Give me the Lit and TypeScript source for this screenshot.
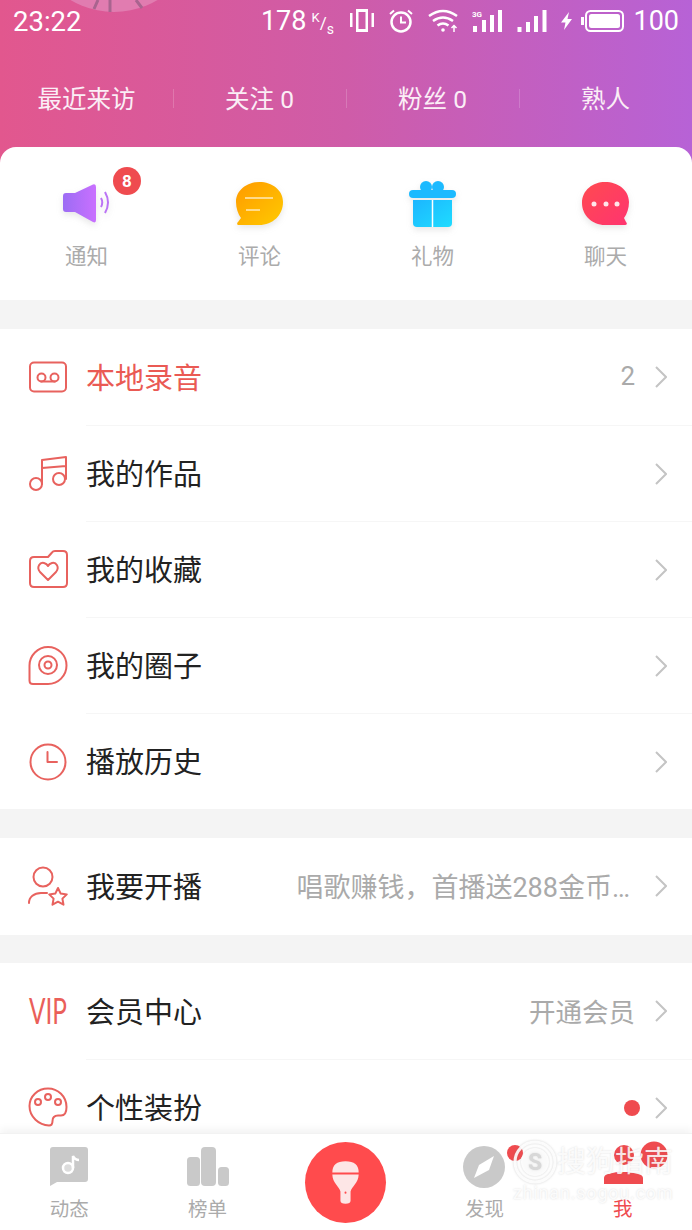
import { LitElement, html, svg, css } from 'lit'
import { customElement } from 'lit/decorators.js'

const rowIcons: Record<string, unknown> = {
  tape: svg`<rect x="2" y="5.500" width="36" height="29" rx="4"/><circle cx="13.500" cy="20.500" r="4"/><circle cx="26.500" cy="20.500" r="4"/><path d="M13 24.500H27"/>`,
  music: svg`<circle cx="8" cy="31" r="6"/><circle cx="31" cy="26" r="6"/><path d="M14 31V7L38 4V26M14 15L38 13"/>`,
  folder: svg`<path d="M6 8H20L24 3.500Q25 2 27 2H35Q39 2 39 6V34Q39 38 35 38H6Q2 38 2 34V12Q2 8 6 8Z"/><path d="M20 31L12 23C8 18 12 13 16 14C18 14.500 19.500 16 20 17C20.500 16 22 14.500 24 14C28 13 32 18 28 23Z"/>`,
  disc: svg`<path d="M20 2A18.500 18.500 0 1 1 20 39H5Q1.500 39 1.500 35.500V20.500A18.500 18.500 0 0 1 20 2Z"/><circle cx="20" cy="20" r="9"/><circle cx="20" cy="20" r="3.500"/>`,
  clock: svg`<circle cx="20" cy="21" r="17.500"/><path d="M19.500 11V21H29"/>`,
  anchor: svg`<circle cx="15" cy="11" r="9.500"/><path d="M1 37C1 31 6 27 13 27H19"/><path d="M30 22L32.700 27.600L38.800 28.400L34.400 32.600L35.500 38.700L30 35.700L24.500 38.700L25.600 32.600L21.200 28.400L27.300 27.600Z"/>`,
  vip: svg`<text class="vip" x="1" y="33" textLength="38" lengthAdjust="spacingAndGlyphs">VIP</text>`,
  palette: svg`<path d="M20 1.500C9.500 1.500 1.500 9.500 1.500 19C1.500 30 11 38 21 38.500C24 38.500 24.500 36 24.500 34C24.500 30 27 28.500 30 28.500H33C36.500 28.500 38.500 25 38.500 20C38.500 9.500 30 1.500 20 1.500Z"/><circle cx="10" cy="15" r="3"/><circle cx="20" cy="10" r="3"/><circle cx="30" cy="15" r="3"/>`,
}

type Row = { icon: string; label: string; accent?: boolean; value?: string; sub?: string; dot?: boolean }

const groups: Row[][] = [
  [
    { icon: 'tape', label: '本地录音', accent: true, value: '2' },
    { icon: 'music', label: '我的作品' },
    { icon: 'folder', label: '我的收藏' },
    { icon: 'disc', label: '我的圈子' },
    { icon: 'clock', label: '播放历史' },
  ],
  [{ icon: 'anchor', label: '我要开播', value: '唱歌赚钱，首播送288金币…', sub: 'long' }],
  [
    { icon: 'vip', label: '会员中心', value: '开通会员', sub: 'short' },
    { icon: 'palette', label: '个性装扮', dot: true },
  ],
]

const quickItems = [
  {
    label: '通知',
    badge: '8',
    icon: svg`<defs><linearGradient id="qa" x1="0" x2="1" y1="0" y2="0"><stop offset="0" stop-color="#9c6cf4"/><stop offset="1" stop-color="#c970ff"/></linearGradient></defs>
      <path fill="url(#qa)" d="M4 13H13L31 4.500Q34 3.500 34 7V40Q34 43.500 31 42L13 32H4Q1 32 1 29V16Q1 13 4 13Z"/>
      <path fill="none" stroke="#bb74f5" stroke-width="2" d="M39 18Q41.500 22.500 39 27M43 12Q49 22.500 43 33"/>`,
  },
  {
    label: '评论',
    icon: svg`<defs><linearGradient id="qb" x1="0" x2="1" y1="0" y2="1"><stop offset="0" stop-color="#ff9a00"/><stop offset="1" stop-color="#ffca00"/></linearGradient></defs>
      <path fill="url(#qb)" d="M24.500 2C37 2 48 10 48 22C48 35 38 45 24 45H4C2 45 1.500 43.500 3 42L6 38C3 34 1 28 1 22C1 10 12 2 24.500 2Z"/>
      <path stroke="#ffe9b8" stroke-width="1.500" d="M10 18H38M11 30H25"/>`,
  },
  {
    label: '礼物',
    icon: svg`<defs><linearGradient id="qc" x1="0" x2="1" y1="0" y2="1"><stop offset="0" stop-color="#1cb6ff"/><stop offset="1" stop-color="#1fdcff"/></linearGradient></defs>
      <circle cx="18" cy="7" r="6" fill="#1cbaff"/><circle cx="30" cy="7" r="6" fill="#1cbaff"/>
      <rect x="1" y="10" width="47" height="8" rx="4" fill="#1cbaff"/>
      <path fill="url(#qc)" d="M5 20H44V43Q44 47 40 47H9Q5 47 5 43Z"/>
      <path stroke="#fff" stroke-width="1.500" d="M24.500 20V47"/>`,
  },
  {
    label: '聊天',
    icon: svg`<defs><linearGradient id="qd" x1="0" x2="1" y1="0" y2="1"><stop offset="0" stop-color="#ff4a50"/><stop offset="1" stop-color="#ff3470"/></linearGradient></defs>
      <path fill="url(#qd)" d="M24 2C12 2 1 10 1 23C1 35 11 45 24 45H44C46 45 46.500 43.500 45 42L43 38C46 34 48 28 48 22C48 10 37 2 24 2Z"/>
      <circle cx="13" cy="24" r="2.500" fill="#ffe6ea"/><circle cx="25" cy="24" r="2.500" fill="#ffe6ea"/><circle cx="36" cy="24" r="2.500" fill="#ffe6ea"/>`,
  },
]

@customElement('app-root')
export class AppRoot extends LitElement {
  static styles = css`
    :host {
      display: block;
      position: relative;
      width: 692px;
      height: 1230px;
      overflow: hidden;
      background: #f4f4f4;
      font-family: Roboto, 'Noto Sans CJK SC', sans-serif;
    }
    .header {
      position: relative;
      height: 163px;
      margin-bottom: -16px;
      background: linear-gradient(90deg, #e2578e 0%, #cf5ca8 50%, #b762d6 100%);
      color: #fff;
    }
    .avatar {
      position: absolute;
      left: 70px;
      top: 0;
    }
    .status {
      display: flex;
      align-items: center;
      height: 42px;
      padding: 0 13px;
      font-size: 27px;
      gap: 14px;
    }
    .time {
      margin-right: auto;
      font-size: 27.500px;
    }
    .status svg {
      display: block;
      fill: #fff;
    }
    .speed {
      display: flex;
      align-items: flex-start;
      margin-left: -9px;
      margin-right: 1px;
      width: 24px;
      height: 22px;
      font-size: 13px;
      line-height: 16px;
    }
    .speed i {
      font-style: normal;
      font-size: 17px;
      line-height: 26px;
    }
    .speed b {
      font-weight: 400;
      font-size: 14px;
      line-height: 38px;
    }
    .batt {
      margin-left: -5px;
    }
    .level {
      margin-left: -5px;
    }
    .tabs {
      display: grid;
      grid-template-columns: repeat(4, 1fr);
      padding-top: 7px;
      height: 96px;
      align-items: center;
      font-size: 24.500px;
      color: #fbeef6;
    }
    .tabs div {
      position: relative;
      text-align: center;
    }
    .tabs div + div::before {
      content: '';
      position: absolute;
      left: 0;
      top: 9px;
      height: 19px;
      width: 1px;
      background: rgba(255, 255, 255, 0.18);
    }
    .quick {
      position: relative;
      display: grid;
      grid-template-columns: repeat(4, 1fr);
      height: 153px;
      box-sizing: border-box;
      padding-top: 33px;
      background: #fff;
      border-radius: 16px 16px 0 0;
    }
    .quick-item {
      position: relative;
      display: flex;
      flex-direction: column;
      align-items: center;
      color: #ababab;
      font-size: 21.500px;
      line-height: 30px;
    }
    .quick-item svg {
      display: block;
      margin-bottom: 14px;
      overflow: visible;
    }
    .shadowed {
      filter: drop-shadow(0 3px 3px rgba(120, 120, 120, 0.18));
    }
    .badge {
      position: absolute;
      left: 113px;
      top: -13px;
      width: 28px;
      height: 28px;
      border-radius: 50%;
      background: #ef4b4f;
      color: #fff;
      font-size: 17px;
      font-weight: 700;
      line-height: 28px;
      text-align: center;
    }
    .group {
      margin-top: 29px;
      background: #fff;
    }
    .quick + .group + .group {
      padding-bottom: 1px;
    }
    .group + .group + .group {
      margin-top: 28px;
    }
    .row {
      display: flex;
      align-items: center;
      height: 96px;
      padding-left: 28px;
    }
    .row svg.ic {
      flex: none;
      overflow: visible;
      fill: none;
      stroke: #e8625e;
      stroke-width: 2;
      stroke-linejoin: round;
      stroke-linecap: round;
    }
    .vip {
      font-family: Lato, sans-serif;
      font-weight: 400;
      font-size: 36px;
      fill: #ea5f5a;
      stroke: none;
    }
    .body {
      flex: 1;
      display: flex;
      align-items: center;
      height: 100%;
      margin-left: 18px;
      padding-right: 25px;
      box-sizing: border-box;
      font-size: 29px;
      color: #222;
    }
    .row + .row .body {
      border-top: 1px solid #f6f6f6;
    }
    .name {
      margin-bottom: 4px;
    }
    .row:first-child .name {
      margin-bottom: 2px;
    }
    .accent {
      color: #ea5a54;
    }
    .value {
      margin-left: auto;
      margin-right: 20px;
      margin-bottom: 2px;
      font-size: 26px;
      color: #aaa;
    }
    .value.short {
      font-size: 26.500px;
    }
    .value.long {
      font-size: 27px;
      margin-right: 25px;
    }
    .dot {
      margin-left: auto;
      margin-right: 15px;
      width: 16px;
      height: 16px;
      border-radius: 50%;
      background: #ef4b4f;
    }
    .chev {
      flex: none;
      margin-left: auto;
      fill: none;
      stroke: #c4c4c4;
      stroke-width: 2;
    }
    .value + .chev,
    .dot + .chev {
      margin-left: 0;
    }
    .nav {
      position: absolute;
      left: 0;
      right: 0;
      bottom: 0;
      height: 97px;
      display: grid;
      grid-template-columns: repeat(5, 1fr);
      background: #fff;
      box-shadow: 0 -4px 8px rgba(0, 0, 0, 0.05);
      border-top: 1px solid #f2f2f2;
      box-sizing: border-box;
    }
    .nav-item {
      display: flex;
      flex-direction: column;
      align-items: center;
      padding-top: 12px;
      font-size: 19.500px;
      line-height: 26px;
      color: #ababab;
    }
    .nav-item svg {
      display: block;
      overflow: visible;
      margin-bottom: 11px;
    }
    .nav-item.on {
      color: #ef4b4f;
    }
    .mic {
      padding-top: 8px;
    }
    .watermark {
      position: absolute;
      left: 513px;
      top: 1140px;
      width: 170px;
      color: rgba(255, 255, 255, 0.85);
      text-shadow: 0 0 2px rgba(120, 120, 120, 0.25);
    }
    .wm-top {
      display: flex;
      align-items: center;
      font-size: 29px;
      line-height: 44px;
    }
    .wm-logo {
      filter: drop-shadow(0 0 1px rgba(120, 120, 120, 0.35));
    }
    .wm-url {
      font-size: 18px;
      line-height: 18px;
      letter-spacing: 0.800px;
    }
  `

  private statusBar() {
    return html`
      <div class="status">
        <span class="time">23:22</span>
        <span>178</span>
        <span class="speed"><span>K</span><i>/</i><b>s</b></span>
        <svg width="24" height="24" viewBox="0 0 24 24">
          <path d="M0 4h2.500v14H0zM21.500 4H24v14h-2.500z"/>
          <path fill-rule="evenodd" d="M6 0h12v23H6zM8.500 3v17h7V3z"/>
        </svg>
        <svg width="26" height="26" viewBox="0 0 26 26" style="fill:none;stroke:#fff;stroke-width:2.500">
          <circle cx="13" cy="14" r="9.500"/>
          <path stroke-width="2" d="M13 8.500V14.500H18M2 6L6 2.500M24 6L20 2.500"/>
        </svg>
        <svg width="30" height="24" viewBox="0 0 30 24" style="fill:none;stroke:#fff;stroke-width:2.500">
          <path d="M1 7Q15 -3 29 7M5 12Q15 5 25 12M9.500 16.500Q15 12.500 20.500 16.500"/>
          <circle cx="15" cy="21" r="1.800" fill="#fff" stroke="none"/>
          <path stroke-width="1.500" d="M26 23V17M23.500 19L26 16.500L28.500 19"/>
        </svg>
        <svg width="31" height="23" viewBox="0 0 31 23">
          <text x="0" y="7" font-size="8" font-family="Roboto" font-weight="700">3G</text>
          <path d="M1 16h4v6H1zM10 10h4v12h-4zM18 5h4v17h-4zM26 0h4v22h-4z"/>
        </svg>
        <svg width="30" height="23" viewBox="0 0 30 23">
          <path d="M0.500 17h4v5h-4zM9 12h4v10H9zM17 6h4v16h-4zM25.500 0h4v22h-4z"/>
        </svg>
        <svg width="11" height="18" viewBox="0 0 11 18"><path d="M8 0L0 10.500H4.500L3 18L11 7H6.500Z"/></svg>
        <svg class="batt" width="43" height="22" viewBox="0 0 43 22">
          <path d="M0 7h3v8H0z"/>
          <rect x="5" y="1" width="37" height="20" rx="4.500" fill="none" stroke="#fff" stroke-width="2"/>
          <rect x="8" y="4" width="31" height="14" rx="2.500"/>
        </svg>
        <span class="level">100</span>
      </div>
    `
  }

  private navBar() {
    return html`
      <nav class="nav">
        <div class="nav-item">
          <svg width="48" height="40" viewBox="0 0 48 40">
            <path fill="#c9c9c9" d="M8 1H40Q43 1 43 4V33Q43 36 40 36H12L5 40V4Q5 1 8 1Z"/>
            <circle cx="23" cy="22" r="5" fill="#dcdcdc" stroke="#fff" stroke-width="2.500"/>
            <path fill="none" stroke="#fff" stroke-width="2.500" d="M28 22V10Q30 14 34 14"/>
          </svg>
          动态
        </div>
        <div class="nav-item">
          <svg width="48" height="40" viewBox="0 0 48 40" fill="#c9c9c9">
            <rect x="3" y="11" width="13" height="29" rx="3.500"/>
            <rect x="17" y="1" width="15" height="39" rx="4"/>
            <rect x="34" y="21" width="11" height="19" rx="3.500"/>
          </svg>
          榜单
        </div>
        <div class="nav-item mic">
          <svg width="81" height="81" viewBox="0 0 80 80">
            <circle cx="40" cy="40" r="40" fill="#ff4b4d"/>
            <path fill="#fde6e6" d="M27 30Q27 19 40 19Q53 19 53 30Z"/>
            <path fill="#fde6e6" d="M27 32H53C53 40 46 44 45 49V58Q45 61 40 61Q35 61 35 58V49C34 44 27 40 27 32Z"/>
            <circle cx="40" cy="50" r="1" fill="#ff4b4d"/>
          </svg>
        </div>
        <div class="nav-item">
          <svg width="48" height="40" viewBox="0 0 48 40">
            <circle cx="24" cy="21" r="21" fill="#c9c9c9"/>
            <path fill="#fff" d="M34 10L19 19L14 32L29 24Z"/>
            <circle cx="55" cy="7" r="8" fill="#ef4b4f"/>
          </svg>
          发现
        </div>
        <div class="nav-item on">
          <svg width="48" height="40" viewBox="0 0 48 40" fill="#ef4b4f">
            <circle cx="25" cy="9" r="10"/>
            <path d="M5 38V32Q5 29 9 28L18 26H30L39 28Q44 29 44 32V38Z"/>
            <circle cx="55" cy="9" r="13.500"/>
          </svg>
          我
        </div>
      </nav>
    `
  }

  render() {
    return html`
      <header class="header">
        <svg class="avatar" width="90" height="13" viewBox="0 0 90 13">
          <circle cx="44" cy="-73" r="85" fill="#e17cb0"/>
          <path stroke="#a9648f" stroke-width="3" d="M28 0L24 9M66 0L72 8M40 0V12"/>
        </svg>
        ${this.statusBar()}
        <div class="tabs">
          <div>最近来访</div>
          <div>关注 0</div>
          <div>粉丝 0</div>
          <div>熟人</div>
        </div>
      </header>

      <section class="quick">
        ${quickItems.map(
          (q) => html`
            <div class="quick-item">
              <svg class="shadowed" width="48" height="48" viewBox="1 0 48 48">${q.icon}</svg>
              ${q.label}
              ${q.badge ? html`<span class="badge">${q.badge}</span>` : ''}
            </div>
          `
        )}
      </section>

      ${groups.map(
        (rows) => html`
          <section class="group">
            ${rows.map(
              (r) => html`
                <div class="row">
                  <svg class="ic" width="40" height="40" viewBox="0 0 40 40">${rowIcons[r.icon]}</svg>
                  <div class="body">
                    <span class="name ${r.accent ? 'accent' : ''}">${r.label}</span>
                    ${r.value ? html`<span class="value ${r.sub ?? ''}">${r.value}</span>` : ''}
                    ${r.dot ? html`<span class="dot"></span>` : ''}
                    <svg class="chev" width="12" height="22" viewBox="0 0 12 22"><path d="M1 1L11 11L1 21"/></svg>
                  </div>
                </div>
              `
            )}
          </section>
        `
      )}

      ${this.navBar()}

      <div class="watermark">
        <div class="wm-top">
          <svg class="wm-logo" width="44" height="44" viewBox="0 0 44 44">
            <circle cx="22" cy="22" r="20" fill="none" stroke="rgba(255,255,255,.9)" stroke-width="3"/>
            <circle cx="22" cy="22" r="14" fill="rgba(255,255,255,.9)"/>
            <text x="22" y="30" text-anchor="middle" font-size="23" font-weight="700" font-family="Roboto" fill="#d8d8d8">S</text>
          </svg>
          <span>搜狗指南</span>
        </div>
        <div class="wm-url">zhinan.sogou.com</div>
      </div>
    `
  }
}

declare global {
  interface HTMLElementTagNameMap {
    'app-root': AppRoot
  }
}
